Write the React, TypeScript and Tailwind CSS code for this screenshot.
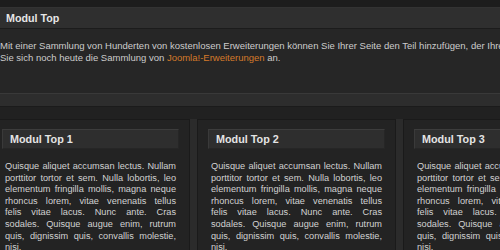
import React from "react";

const lines = [
  "Quisque aliquet accumsan lectus. Nullam",
  "porttitor tortor et sem. Nulla lobortis, leo",
  "elementum fringilla mollis, magna neque",
  "rhoncus lorem, vitae venenatis tellus",
  "felis vitae lacus. Nunc ante. Cras",
  "sodales. Quisque augue enim, rutrum",
  "quis, dignissim quis, convallis molestie,",
];

function Column({ title }: { title: string }) {
  return (
    <div className="w-[199px] shrink-0 border border-[#1a1a1a] bg-[#232323] px-[10px] pt-[9px]">
      <div className="h-[20px] border border-t-[#3c3c3c] border-l-[#3a3a3a] border-r-[#262626] border-b-[#262626] bg-[#2e2e2e] pl-[7px] text-[10.8px] font-bold leading-[18px] text-[#e4e4e4]">
        {title}
      </div>
      <div className="mt-[12px] px-[3px] text-[9.2px] leading-[11.6px] text-[#d2d2d2]">
        {lines.map((l, i) => (
          <div key={i} className="text-justify [text-align-last:justify]">
            {l}
          </div>
        ))}
        <div>nisi.</div>
      </div>
    </div>
  );
}

export default function App() {
  return (
    <div className="w-[500px] h-[250px] overflow-hidden bg-[#212121] font-['Liberation_Sans',Arial,sans-serif]">
      <div className="h-[8px] bg-[#1d1d1d] border-b border-[#333333]" />
      <div className="h-[21px] bg-[#2f2f2f] border-b border-[#1c1c1c] pl-[6px] text-[10.7px] font-bold leading-[20px] text-[#e6e6e6]">
        Modul Top
      </div>
      <div className="h-[64px] bg-[#262626] pt-[11px] text-[9.5px] leading-[12px] text-[#cccccc] whitespace-nowrap">
        <div>
          Mit einer Sammlung von Hunderten von kostenlosen Erweiterungen können Sie Ihrer Seite den Teil hinzufügen, der Ihren Bedürfnissen entspricht. Sehen
        </div>
        <div>
          Sie sich noch heute die Sammlung von{" "}
          <span className="text-[#d47a2a]">Joomla!-Erweiterungen</span> an.
        </div>
      </div>
      <div className="h-[14px] bg-[#2d2d2d] border-t border-[#393939] border-b border-b-[#1b1b1b]" />
      <div className="h-[12px] bg-[#212121]" />
      <div className="flex ml-[-9px] gap-[7px] bg-[#2b2b2b] w-[700px] h-[200px]">
        <Column title="Modul Top 1" />
        <Column title="Modul Top 2" />
        <Column title="Modul Top 3" />
      </div>
    </div>
  );
}
